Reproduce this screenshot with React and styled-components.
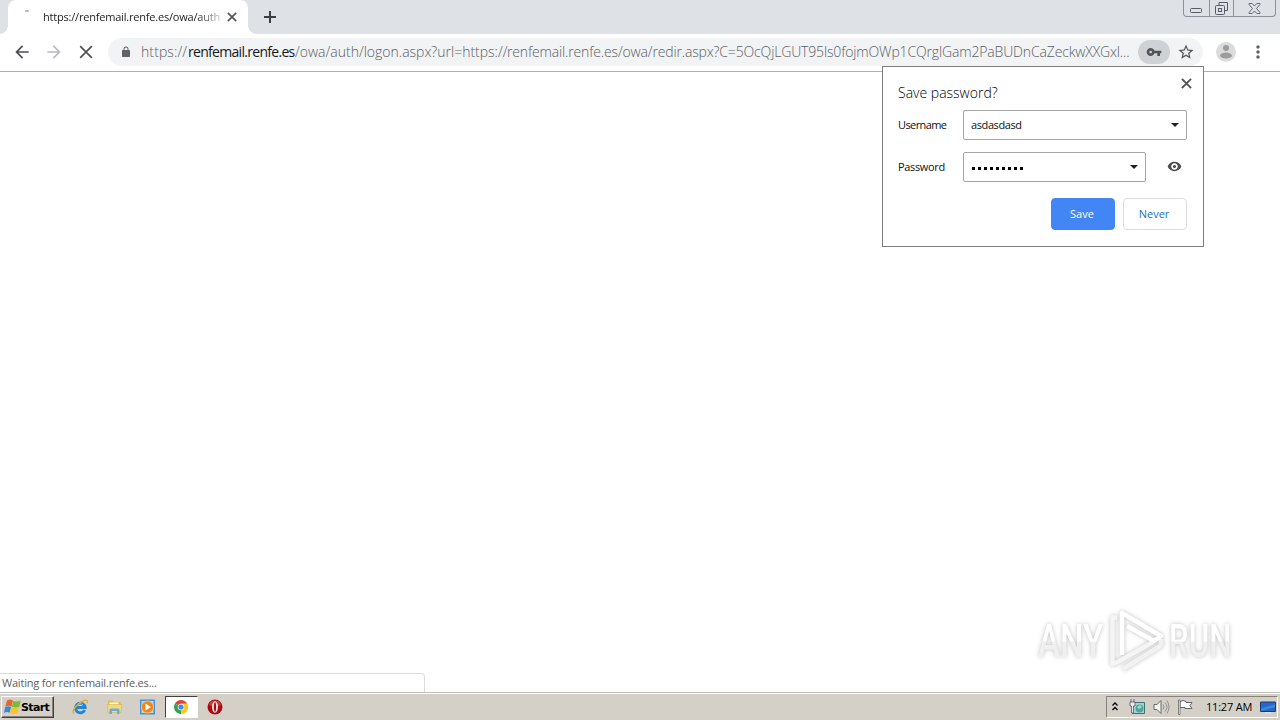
import React from "react";
import styled, { createGlobalStyle } from "styled-components";

const GlobalStyle = createGlobalStyle`
  * {
    box-sizing: border-box;
  }
  body {
    margin: 0;
    overflow: hidden;
    background: #fff;
    font-family: "Open Sans", "Noto Sans", sans-serif;
    font-size: 11px;
    color: #222;
  }
  svg {
    display: block;
    flex: none;
  }
`;

const Screen = styled.div`
  width: 1280px;
  height: 720px;
  display: flex;
  flex-direction: column;
  position: relative;
  overflow: hidden;
`;

const TabStrip = styled.header`
  height: 34px;
  flex: none;
  display: flex;
  align-items: flex-end;
  padding-left: 8px;
  background: #dee1e6;
`;

const Tab = styled.div`
  width: 240px;
  height: 34px;
  display: flex;
  align-items: center;
  padding: 0 11px 0 14px;
  border-radius: 8px 8px 0 0;
  background: #fff;
  position: relative;
  &::before,
  &::after {
    content: "";
    position: absolute;
    bottom: 0;
    width: 8px;
    height: 8px;
  }
  &::before {
    left: -8px;
    background: radial-gradient(circle at 0 0, #dee1e6 7.5px, #fff 8px);
  }
  &::after {
    right: -8px;
    background: radial-gradient(circle at 100% 0, #dee1e6 7.5px, #fff 8px);
  }
`;

const Throbber = styled.span`
  width: 4px;
  height: 2px;
  margin: 0 14px 12px 3px;
  background: #b5b8bc;
  border-radius: 1px;
`;

const TabTitle = styled.span`
  width: 177px;
  white-space: nowrap;
  font-size: 11px;
  line-height: 18px;
  letter-spacing: -0.2px;
  color: #222;
  mask-image: linear-gradient(to right, #000 154px, transparent 184px);
`;

const TabClose = styled.span`
  margin-left: auto;
`;

const NewTab = styled.span`
  align-self: center;
  margin-left: 15px;
`;

const WindowControls = styled.div`
  align-self: flex-start;
  margin: 0 4px 0 auto;
  width: 93px;
  height: 17px;
  display: flex;
  border: 1px solid #8d9199;
  border-top: 0;
  border-radius: 0 0 4px 4px;
`;

const WindowButton = styled.span`
  width: ${(props) => props.$width}px;
  display: flex;
  align-items: center;
  justify-content: center;
  & + & {
    border-left: 1px solid #8d9199;
  }
`;

const Toolbar = styled.nav`
  height: 38px;
  flex: none;
  display: flex;
  align-items: center;
  padding: 0 12px 1px;
  border-bottom: 1px solid #aeaeae;
  background: #fff;
`;

const NavButton = styled.span`
  width: 20px;
  margin-right: 12px;
  display: flex;
  justify-content: center;
`;

const AddressBar = styled.div`
  width: 1096px;
  height: 28px;
  display: flex;
  align-items: center;
  padding: 0 6px 0 12px;
  border-radius: 14px;
  background: #f1f3f4;
`;

const Url = styled.div`
  width: 990px;
  margin-left: 9px;
  display: flex;
  white-space: nowrap;
  font-size: 14px;
  font-weight: 300;
  line-height: 20px;
  color: #5c6064;
`;

const UrlPart = styled.span`
  width: ${(props) => props.$width}px;
  flex: none;
  letter-spacing: ${(props) => props.$spacing}px;
  color: ${(props) => (props.$host ? "#17191c" : "inherit")};
  font-weight: ${(props) => (props.$host ? 400 : 300)};
`;

const KeyChip = styled.span`
  width: 32px;
  height: 24px;
  margin-left: 7px;
  display: flex;
  align-items: center;
  justify-content: center;
  border-radius: 12px;
  background: #cfd2d4;
`;

const StarButton = styled.span`
  margin-left: 7px;
`;

const Avatar = styled.span`
  margin-left: 13px;
`;

const MenuButton = styled.span`
  margin-left: 12px;
`;

const Page = styled.main`
  flex: 1;
  display: flex;
  flex-direction: column;
  background: #fff;
`;

const StatusBubble = styled.div`
  width: 425px;
  height: 19px;
  margin-top: auto;
  padding-left: 2px;
  border: 1px solid #dcdcdc;
  border-width: 1px 1px 0 0;
  border-radius: 0 4px 0 0;
  font-size: 11px;
  line-height: 17px;
  letter-spacing: -0.2px;
  color: #606060;
`;

const Bubble = styled.section`
  position: absolute;
  top: 66px;
  left: 882px;
  width: 322px;
  height: 181px;
  padding: 15px 16px 0 15px;
  border: 1px solid #7d7d7d;
  background: #fff;
`;

const BubbleClose = styled.span`
  position: absolute;
  top: 11px;
  right: 11px;
`;

const BubbleTitle = styled.h1`
  height: 22px;
  margin: 0 0 6px;
  font-size: 14px;
  font-weight: 300;
  line-height: 21px;
  letter-spacing: 0;
  color: #000;
`;

const FieldRow = styled.div`
  height: 30px;
  margin-bottom: 12px;
  display: flex;
  align-items: center;
`;

const FieldLabel = styled.span`
  width: 65px;
  padding-bottom: 2px;
  letter-spacing: ${(props) => props.$spacing}px;
  color: #111;
`;

const FieldBox = styled.div`
  width: ${(props) => props.$width}px;
  height: 30px;
  display: flex;
  align-items: center;
  justify-content: space-between;
  padding: 0 7px;
  border: 1px solid #a6a6a6;
  border-radius: 2px;
`;

const FieldValue = styled.span`
  padding-bottom: 2px;
  letter-spacing: -0.4px;
  color: #111;
`;

const Dots = styled.span`
  display: flex;
  gap: 3px;
  padding: 3px 0 0 1px;
`;

const Dot = styled.i`
  width: 3px;
  height: 3px;
  background: #000;
`;

const EyeButton = styled.span`
  margin: -1px 0 0 21px;
`;

const Actions = styled.div`
  display: flex;
  justify-content: flex-end;
  gap: 8px;
  margin-top: 16px;
`;

const Button = styled.button`
  width: 64px;
  height: 32px;
  padding: 0 2px 2px 0;
  font: inherit;
  border: 1px solid ${(props) => (props.$primary ? "#4285f4" : "#dadce0")};
  border-radius: 4px;
  background: ${(props) => (props.$primary ? "#4285f4" : "#fff")};
  color: ${(props) => (props.$primary ? "#fff" : "#1b6fc9")};
`;

const Watermark = styled.div`
  position: absolute;
  left: 1038px;
  top: 608px;
  width: 195px;
  height: 66px;
  display: flex;
  align-items: center;
  justify-content: space-between;
  filter: drop-shadow(0 0 2px rgba(0, 0, 0, 0.25));
`;

const WatermarkWord = styled.span`
  width: 100px;
  flex: none;
  margin-right: -36px;
  font-family: Roboto, sans-serif;
  font-size: 46px;
  font-weight: 500;
  line-height: 68px;
  color: transparent;
  background: linear-gradient(#fff 50%, #f0f0f0 52%);
  background-clip: text;
  transform: scaleX(${(props) => props.$scale});
  transform-origin: left;
`;

const Taskbar = styled.footer`
  height: 28px;
  flex: none;
  display: flex;
  align-items: center;
  padding: 1px 2px 0 1px;
  border-top: 1px solid #c0c0bc;
  box-shadow: inset 0 1px #fff;
  background: #d4d0c8;
`;

const StartButton = styled.div`
  width: 53px;
  height: 22px;
  display: flex;
  align-items: center;
  padding-left: 2px;
  border: 1px solid;
  border-color: #fff #404040 #404040 #fff;
  box-shadow: inset -1px -1px #87837c;
  font-family: "DejaVu Sans", sans-serif;
  font-size: 11px;
  font-weight: 700;
  letter-spacing: -0.65px;
  color: #000;
`;

const QuickLaunch = styled.div`
  display: flex;
  align-items: center;
  margin-left: 10px;
`;

const TaskItem = styled.span`
  width: 33.5px;
  height: 22px;
  display: flex;
  align-items: center;
  justify-content: center;
  border: 1px solid transparent;
  ${(props) =>
    props.$active &&
    `
    border-color: #404040 #fff #fff #404040;
    background: #fff;
  `}
`;

const Tray = styled.div`
  width: 172px;
  height: 22px;
  margin-left: auto;
  display: flex;
  align-items: center;
  padding: 0 1px 0 5px;
  border: 1px solid;
  border-color: #87837c #fff #fff #87837c;
`;

const TrayIcon = styled.span`
  margin-left: ${(props) => props.$gap || 0}px;
`;

const Clock = styled.span`
  width: 55px;
  margin-left: 12px;
  padding-bottom: 2px;
  white-space: nowrap;
  letter-spacing: -0.2px;
  color: #000;
`;

const Glyph = ({ d, size = 20, color = "#5f6368" }) => (
  <svg width={size} height={size} viewBox="0 0 24 24" fill={color}>
    <path d={d} />
  </svg>
);

const Cross = ({ size, color = "#505357", stroke = 2 }) => (
  <svg width={size} height={size} viewBox="0 0 12 12" stroke={color} strokeWidth={stroke}>
    <path d="M1 1l10 10M11 1L1 11" />
  </svg>
);

const Arrow = () => (
  <svg width="8" height="4" viewBox="0 0 8 4">
    <path d="M0 0h8L4 4z" fill="#202020" />
  </svg>
);

const paths = {
  back: "M20 11H7.83l5.59-5.59L12 4l-8 8 8 8 1.41-1.41L7.83 13H20z",
  forward: "M12 4l-1.41 1.41L16.17 11H4v2h12.17l-5.58 5.59L12 20l8-8z",
  lock: "M18 8h-1V6c0-2.76-2.24-5-5-5S7 3.24 7 6v2H6c-1.1 0-2 .9-2 2v10c0 1.1.9 2 2 2h12c1.1 0 2-.9 2-2V10c0-1.1-.9-2-2-2zM8.9 6a3.1 3.1 0 0 1 6.2 0v2H8.9z",
  key: "M12.65 10C11.83 7.67 9.61 6 7 6c-3.31 0-6 2.69-6 6s2.69 6 6 6c2.61 0 4.83-1.67 5.65-4H17v4h4v-4h2v-4zM7 14c-1.1 0-2-.9-2-2s.9-2 2-2 2 .9 2 2-.9 2-2 2z",
  star: "M22 9.24l-7.19-.62L12 2 9.19 8.63 2 9.24l5.46 4.73L5.82 21 12 17.27 18.18 21l-1.63-7.03zM12 15.4l-3.76 2.27 1-4.28-3.32-2.88 4.38-.38L12 6.1l1.71 4.04 4.38.38-3.32 2.88 1 4.28z",
  dots: "M12 8c1.1 0 2-.9 2-2s-.9-2-2-2-2 .9-2 2 .9 2 2 2zm0 2c-1.1 0-2 .9-2 2s.9 2 2 2 2-.9 2-2-.9-2-2-2zm0 6c-1.1 0-2 .9-2 2s.9 2 2 2 2-.9 2-2-.9-2-2-2z",
  eye: "M12 4.5C7 4.5 2.73 7.61 1 12c1.73 4.39 6 7.5 11 7.5s9.27-3.11 11-7.5c-1.73-4.39-6-7.5-11-7.5zM12 17.3c-2.93 0-5.3-2.37-5.3-5.3s2.37-5.3 5.3-5.3 5.3 2.37 5.3 5.3-2.37 5.3-5.3 5.3zm0-7.8c-1.38 0-2.5 1.12-2.5 2.5s1.12 2.5 2.5 2.5 2.5-1.12 2.5-2.5-1.12-2.5-2.5-2.5z",
};

const WindowsFlag = () => (
  <svg width="17" height="16" viewBox="0 0 17 16">
    <path d="M3 1.5Q6-.5 8.9 1.5L7.400 7.600Q4.500 5.800 1.300 7.600z" fill="#e8642c" />
    <path d="M9.200 1.800Q12 3.300 16.800 1.600L15.200 7.900Q11 9.300 7.700 7.800z" fill="#7dba3c" />
    <path d="M1.200 8Q4 6.300 7.100 8L5.600 13.700Q2.800 12.300-.2 14z" fill="#3c87d8" />
    <path d="M7.500 8.300Q10.500 9.800 15 8.300L13.500 14.300Q9 15.800 6 14.200z" fill="#f6c52e" />
  </svg>
);

const ExplorerIcon = () => (
  <svg width="17" height="16" viewBox="0 0 17 16" fill="none">
    <path d="M12.700 11A4.800 4.800 0 1 1 13.100 8.500H4.500" stroke="#2486d2" strokeWidth="3" />
    <path d="M5 6.200A4 4 0 0 1 11 6" stroke="#72c4f5" />
    <path d="M2 14.500C-1 12 5 5 10 2.500 14 .3 16.500 1 15 4.300" stroke="#e3ac2c" strokeWidth="1.400" />
  </svg>
);

const FolderIcon = () => (
  <svg width="17" height="16" viewBox="0 0 17 16">
    <path d="M2 1.500h5l1 1.500h6.500V11H2z" fill="#e2bb4c" />
    <path d="M3.500 3.500h9V8h-9z" fill="#fffbe2" />
    <path d="M1 5.500h15l-1 8H2z" fill="#f4d978" stroke="#d4b352" strokeWidth=".6" />
    <path d="M3.500 15v-4q0-1.500 1.500-1.500h7q1.500 0 1.500 1.500v4H11v-3H6v3z" fill="#64b0dc" />
  </svg>
);

const MediaIcon = () => (
  <svg width="17" height="16" viewBox="0 0 17 16">
    <path d="M1 .5h15v15H1z" fill="#4c92d0" />
    <path d="M2.500 2h12v12h-12z" fill="#b5d9f1" />
    <circle cx="8.500" cy="8" r="6" fill="#ef8418" stroke="#fac16a" />
    <path d="M6.500 4.500L12 8l-5.500 3.500z" fill="#fff" />
  </svg>
);

const ChromeIcon = () => (
  <svg width="14" height="14" viewBox="0 0 14 14">
    <path d="M7 7L.94 3.500A7 7 0 0 1 13.060 3.500z" fill="#e34133" />
    <path d="M7 7L13.060 3.500A7 7 0 0 1 7 14z" fill="#fbc918" />
    <path d="M7 7v7A7 7 0 0 1 .94 3.500z" fill="#33a352" />
    <path d="M7 3.500h6.060A7 7 0 0 1 7 14l3-5.200z" fill="#fbc918" />
    <circle cx="7" cy="7" r="3.300" fill="#fff" />
    <circle cx="7" cy="7" r="2.600" fill="#4285f4" />
  </svg>
);

const OperaIcon = () => (
  <svg width="16" height="16" viewBox="0 0 16 16">
    <circle cx="8" cy="8" r="7.500" fill="#a90c12" />
    <path d="M2 6a6.300 6.300 0 0 1 12 0q-6 3-12 0z" fill="#cf3b3a" />
    <ellipse cx="8" cy="8" rx="3" ry="5.700" fill="#f6e6e6" />
    <ellipse cx="8" cy="8" rx="1.100" ry="4.700" fill="#9b1115" />
  </svg>
);

const apps = [
  { name: "explorer", icon: <ExplorerIcon /> },
  { name: "files", icon: <FolderIcon /> },
  { name: "media", icon: <MediaIcon /> },
  { name: "chrome", icon: <ChromeIcon />, active: true },
  { name: "opera", icon: <OperaIcon /> },
];

const SystemTray = () => (
  <Tray>
    <TrayIcon>
      <svg width="6" height="10" viewBox="0 0 6 10" fill="none" stroke="#000" strokeWidth="1.300">
        <path d="M.5 3.500L3 1l2.500 2.500M.5 8L3 5.500 5.500 8" />
      </svg>
    </TrayIcon>
    <TrayIcon $gap={11}>
      <svg width="17" height="16" viewBox="0 0 17 16">
        <path d="M3.500 3.500h12v11h-12z" fill="#a8d3d0" stroke="#426f76" />
        <circle cx="10.500" cy="9.500" r="4" fill="#4aa5a4" />
        <path d="M8 8l3-2 2 2-3 2z" fill="#a8dab3" />
        <path d="M1 3h5v4H4.500v7H2.500V7H1zM2 0v3M5 0v3" fill="#eee" stroke="#555" strokeWidth=".8" />
      </svg>
    </TrayIcon>
    <TrayIcon $gap={7}>
      <svg width="17" height="16" viewBox="0 0 17 16" fill="none" stroke="#686868">
        <path d="M1 5.500h3l4-4v13l-4-4H1z" fill="#f6f6f6" />
        <path d="M10 5.500q2 2.500 0 5M12 3.500q4 4.500 0 9M14 1.500q4 6.500 0 13" stroke="#929292" />
      </svg>
    </TrayIcon>
    <TrayIcon $gap={7}>
      <svg width="17" height="16" viewBox="0 0 17 16">
        <path d="M3 2.500q3-2 6 0v1h6l-2 3 2 3H8V8.500H3z" fill="#fff" stroke="#666" />
        <path d="M1.500 1v14.500h1.500V1z" fill="#fff" stroke="#666" strokeWidth=".8" />
      </svg>
    </TrayIcon>
    <Clock>11:27 AM</Clock>
    <TrayIcon>
      <svg width="16" height="15" viewBox="0 0 16 15">
        <path d="M.5 2h15v9.500H.5z" fill="#2468c8" stroke="#173c79" />
        <path d="M1 11V8.500L15 4.500V7z" fill="#4387d9" />
        <path d="M5 12h6v1.500H5z" fill="#d9e3ee" />
      </svg>
    </TrayIcon>
  </Tray>
);

const PasswordBubble = () => (
  <Bubble>
    <BubbleTitle>Save password?</BubbleTitle>
    <BubbleClose>
      <Cross size={11} />
    </BubbleClose>
    <FieldRow>
      <FieldLabel $spacing={-0.6}>Username</FieldLabel>
      <FieldBox $width={224}>
        <FieldValue>asdasdasd</FieldValue>
        <Arrow />
      </FieldBox>
    </FieldRow>
    <FieldRow>
      <FieldLabel $spacing={-0.35}>Password</FieldLabel>
      <FieldBox $width={183}>
        <Dots>
          {Array.from({ length: 9 }, (_, index) => (
            <Dot key={index} />
          ))}
        </Dots>
        <Arrow />
      </FieldBox>
      <EyeButton>
        <Glyph d={paths.eye} size={15} color="#4c4c4c" />
      </EyeButton>
    </FieldRow>
    <Actions>
      <Button $primary>Save</Button>
      <Button>Never</Button>
    </Actions>
  </Bubble>
);

export default function App() {
  return (
    <Screen>
      <GlobalStyle />
      <TabStrip>
        <Tab>
          <Throbber />
          <TabTitle>https://renfemail.renfe.es/owa/auth</TabTitle>
          <TabClose>
            <Cross size={10} stroke={1.9} />
          </TabClose>
        </Tab>
        <NewTab>
          <svg width="14" height="14" viewBox="0 0 14 14" stroke="#3c4043" strokeWidth="2">
            <path d="M7 1v12M1 7h12" />
          </svg>
        </NewTab>
        <WindowControls>
          <WindowButton $width={25}>
            <svg width="12" height="12" viewBox="0 0 12 12" fill="none" stroke="#555a65">
              <rect x=".5" y="6.500" width="11" height="4" rx="1" />
            </svg>
          </WindowButton>
          <WindowButton $width={25}>
            <svg width="13" height="13" viewBox="0 0 13 13" fill="none" stroke="#555a65">
              <path d="M4 3.500v-3h8.500v8H9.500" />
              <rect x=".5" y="3.500" width="9" height="9" rx="1" />
              <rect x="3.500" y="6.500" width="3" height="3" />
            </svg>
          </WindowButton>
          <WindowButton $width={42}>
            <svg width="13" height="11" viewBox="0 0 13 11" fill="none" stroke="#666a73">
              <path d="M1 .5h3.200L6.500 3 8.800.5H12v1L8.500 5.500 12 9.500v1H8.800L6.500 8l-2.300 2.500H1v-1l3.500-4L1 1.500z" />
            </svg>
          </WindowButton>
        </WindowControls>
      </TabStrip>

      <Toolbar>
        <NavButton>
          <Glyph d={paths.back} color="#4b4e52" />
        </NavButton>
        <NavButton>
          <Glyph d={paths.forward} color="#b9bbbe" />
        </NavButton>
        <NavButton>
          <Cross size={14} stroke={1.5} />
        </NavButton>
        <AddressBar>
          <Glyph d={paths.lock} size={12} />
          <Url>
            <UrlPart $width={47} $spacing={0.1}>
              https://
            </UrlPart>
            <UrlPart $width={107} $spacing={-0.7} $host>
              renfemail.renfe.es
            </UrlPart>
            <UrlPart $width={212} $spacing={0}>
              /owa/auth/logon.aspx?url=https://
            </UrlPart>
            <UrlPart $width={624} $spacing={-0.15}>
              renfemail.renfe.es/owa/redir.aspx?C=5OcQjLGUT95ls0fojmOWp1CQrglGam2PaBUDnCaZeckwXXGxl...
            </UrlPart>
          </Url>
          <KeyChip>
            <Glyph d={paths.key} size={16} color="#505357" />
          </KeyChip>
          <StarButton>
            <Glyph d={paths.star} size={18} color="#505357" />
          </StarButton>
        </AddressBar>
        <Avatar>
          <svg width="20" height="20" viewBox="0 0 20 20">
            <circle cx="10" cy="10" r="10" fill="#dcdcdc" />
            <circle cx="10" cy="6" r="3" fill="#9c9c9c" />
            <ellipse cx="10" cy="13.500" rx="6" ry="3" fill="#9c9c9c" />
          </svg>
        </Avatar>
        <MenuButton>
          <Glyph d={paths.dots} />
        </MenuButton>
      </Toolbar>

      <Page>
        <StatusBubble>Waiting for renfemail.renfe.es...</StatusBubble>
      </Page>

      <Watermark>
        <WatermarkWord $scale={0.72}>ANY</WatermarkWord>
        <svg width="58" height="66" viewBox="0 0 58 66" fill="none" strokeWidth="4.5" strokeLinejoin="round">
          <path d="M16 61l38-23.500V31" stroke="#f1f1f1" />
          <path d="M10 9.500H5.500V56l7-3L46 34" stroke="#f5f5f5" />
          <path d="M15 47V5l39 23-7 5-27-15" stroke="#fff" />
        </svg>
        <WatermarkWord $scale={0.68}>RUN</WatermarkWord>
      </Watermark>

      <PasswordBubble />

      <Taskbar>
        <StartButton>
          <WindowsFlag />
          Start
        </StartButton>
        <QuickLaunch>
          {apps.map((app) => (
            <TaskItem key={app.name} $active={app.active}>
              {app.icon}
            </TaskItem>
          ))}
        </QuickLaunch>
        <SystemTray />
      </Taskbar>
    </Screen>
  );
}
